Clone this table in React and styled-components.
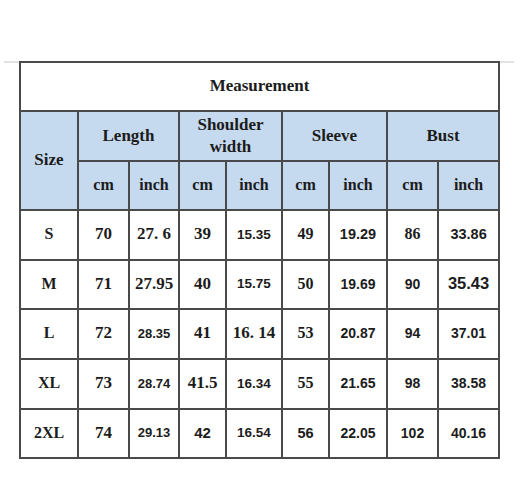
import React from 'react';
import styled, { createGlobalStyle } from 'styled-components';

// ─── Global ──────────────────────────────────────────────────────────────────

const GlobalStyle = createGlobalStyle`
  html, body {
    margin: 0;
    padding: 0;
    background: #ffffff;
  }
`;

const SERIF = '"Liberation Serif", "Times New Roman", serif';
const SANS = '"Liberation Sans", Arial, sans-serif';

// ─── Layout ──────────────────────────────────────────────────────────────────

const Page = styled.div`
  width: 522px;
  height: 502px;
  padding-top: 61px;
  box-sizing: border-box;
`;

const Rule = styled.div`
  margin: 0 8px 0 4px;
  border-top: 2px solid #e2e2e2;
`;

const Table = styled.table`
  margin: -2px 0 0 15px;
  width: 481px;
  table-layout: fixed;
  border-collapse: collapse;
  color: #1c1c1c;
`;

const Row = styled.tr`
  height: ${({ $h }) => $h}px;
`;

const Head = styled.th`
  border: 2px solid #4a4a4a;
  background: ${({ $blue }) => ($blue ? '#c6daef' : '#ffffff')};
  font-family: ${SERIF};
  font-weight: 700;
  font-size: ${({ $size }) => $size || 17}px;
  line-height: 1.3;
  text-align: center;
  vertical-align: middle;
  padding: 0;
`;

const Cell = styled.td`
  border: 2px solid #4a4a4a;
  font-family: ${({ $sans }) => ($sans ? SANS : SERIF)};
  font-weight: 700;
  font-size: ${({ $size }) => $size}px;
  text-align: center;
  vertical-align: middle;
  padding: 0 0 2px;
  white-space: nowrap;
`;

// ─── Data ────────────────────────────────────────────────────────────────────

const WIDTHS = [58, 51, 50, 47, 56, 47, 58, 51, 61];
const GROUPS = ['Length', 'Shoulder\nwidth', 'Sleeve', 'Bust'];

// [text, sans?, size]
const ROWS = [
  [['S', 0, 16], ['70', 0, 17], ['27. 6', 0, 17], ['39', 0, 17], ['15.35', 1, 13.5], ['49', 0, 16], ['19.29', 1, 14.5], ['86', 0, 16], ['33.86', 1, 14.5]],
  [['M', 0, 16], ['71', 0, 17], ['27.95', 0, 17], ['40', 0, 17], ['15.75', 1, 13.5], ['50', 0, 16], ['19.69', 1, 14], ['90', 1, 14], ['35.43', 1, 16.5]],
  [['L', 0, 16], ['72', 0, 17], ['28.35', 1, 13], ['41', 0, 17], ['16. 14', 0, 17], ['53', 0, 16], ['20.87', 1, 14], ['94', 1, 14], ['37.01', 1, 14]],
  [['XL', 0, 16], ['73', 0, 17], ['28.74', 1, 13], ['41.5', 0, 17], ['16.34', 1, 13.5], ['55', 0, 16], ['21.65', 1, 14], ['98', 1, 14], ['38.58', 1, 14]],
  [['2XL', 0, 16], ['74', 0, 17], ['29.13', 1, 13], ['42', 1, 15], ['16.54', 1, 13.5], ['56', 1, 14.5], ['22.05', 1, 14], ['102', 1, 14], ['40.16', 1, 14]],
];
const ROW_HEIGHTS = [50, 49, 50, 50, 49];

// ─── Component ───────────────────────────────────────────────────────────────

const App = () => (
  <Page>
    <GlobalStyle />
    <Rule>
      <Table>
        <colgroup>
          {WIDTHS.map((w, i) => (
            <col key={i} style={{ width: w }} />
          ))}
        </colgroup>
        <thead>
          <Row $h={49}>
            <Head colSpan={9}>Measurement</Head>
          </Row>
          <Row $h={50}>
            <Head $blue rowSpan={2}>Size</Head>
            {GROUPS.map((g) => (
              <Head $blue colSpan={2} key={g}>
                {g.split('\n').map((line, i) => (
                  <React.Fragment key={line}>
                    {i > 0 && <br />}
                    {line}
                  </React.Fragment>
                ))}
              </Head>
            ))}
          </Row>
          <Row $h={49}>
            {GROUPS.map((g) => (
              <React.Fragment key={g}>
                <Head $blue $size={16}>cm</Head>
                <Head $blue $size={16}>inch</Head>
              </React.Fragment>
            ))}
          </Row>
        </thead>
        <tbody>
          {ROWS.map((row, r) => (
            <Row $h={ROW_HEIGHTS[r]} key={row[0][0]}>
              {row.map(([text, sans, size], c) => (
                <Cell key={c} $sans={!!sans} $size={size}>
                  {text}
                </Cell>
              ))}
            </Row>
          ))}
        </tbody>
      </Table>
    </Rule>
  </Page>
);

export default App;
